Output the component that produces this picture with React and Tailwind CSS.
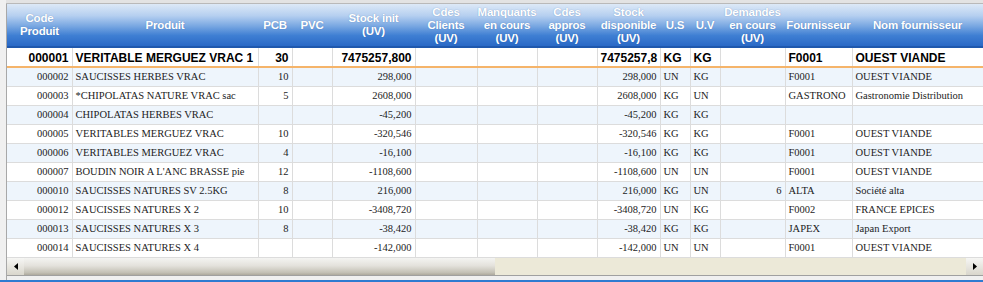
import React from "react";

const cols = [
    { key: "code", label: ["Code", "Produit"], w: 65, align: "right" },
    { key: "nom", label: ["Produit"], w: 186, align: "left" },
    { key: "pcb", label: ["PCB"], w: 34, align: "right" },
    { key: "pvc", label: ["PVC"], w: 40, align: "right" },
    { key: "init", label: ["Stock init", "(UV)"], w: 83, align: "right" },
    { key: "cli", label: ["Cdes", "Clients", "(UV)"], w: 62, align: "right" },
    { key: "manq", label: ["Manquants", "en cours", "(UV)"], w: 60, align: "right" },
    { key: "appro", label: ["Cdes", "appros", "(UV)"], w: 60, align: "right" },
    { key: "dispo", label: ["Stock", "disponible", "(UV)"], w: 63, align: "right" },
    { key: "us", label: ["U.S"], w: 30, align: "left" },
    { key: "uv", label: ["U.V"], w: 30, align: "left" },
    { key: "dem", label: ["Demandes", "en cours", "(UV)"], w: 65, align: "right" },
    { key: "four", label: ["Fournisseur"], w: 67, align: "left" },
    { key: "nomf", label: ["Nom fournisseur"], w: 131, align: "left" },
];

const r = (code, nom, pcb, stock, us, uv, four, nomf, dem = "") => ({
    code, nom, pcb, pvc: "", init: stock, cli: "", manq: "", appro: "",
    dispo: stock, us, uv, dem, four, nomf,
});

const first = {
    code: "000001", nom: "VERITABLE MERGUEZ VRAC 1", pcb: "30", pvc: "",
    init: "7475257,800", cli: "", manq: "", appro: "", dispo: "7475257,8",
    us: "KG", uv: "KG", dem: "", four: "F0001", nomf: "OUEST VIANDE",
};

const rows = [
    r("000002", "SAUCISSES HERBES VRAC", "10", "298,000", "UN", "KG", "F0001", "OUEST VIANDE"),
    r("000003", "*CHIPOLATAS NATURE VRAC sac", "5", "2608,000", "KG", "UN", "GASTRONO", "Gastronomie Distribution"),
    r("000004", "CHIPOLATAS HERBES VRAC", "", "-45,200", "KG", "KG", "", ""),
    r("000005", "VERITABLES MERGUEZ VRAC", "10", "-320,546", "KG", "KG", "F0001", "OUEST VIANDE"),
    r("000006", "VERITABLES MERGUEZ VRAC", "4", "-16,100", "KG", "KG", "F0001", "OUEST VIANDE"),
    r("000007", "BOUDIN NOIR A L'ANC BRASSE pie", "12", "-1108,600", "UN", "UN", "F0001", "OUEST VIANDE"),
    r("000010", "SAUCISSES NATURES SV 2.5KG", "8", "216,000", "KG", "UN", "ALTA", "Société alta", "6"),
    r("000012", "SAUCISSES NATURES X 2", "10", "-3408,720", "UN", "KG", "F0002", "FRANCE EPICES"),
    r("000013", "SAUCISSES NATURES X 3", "8", "-38,420", "KG", "KG", "JAPEX", "Japan Export"),
    r("000014", "SAUCISSES NATURES X 4", "", "-142,000", "UN", "UN", "F0001", "OUEST VIANDE"),
    r("", "", "", "", "", "", "", ""),
];

export default function App() {
    return (
        <div className="w-[983px] h-[282px] bg-[#f0f0f0] flex flex-col overflow-hidden font-['Liberation_Sans',Arial,sans-serif]">
            <div className="h-[4px] bg-[#e3e3e3] border-b border-[#b9b9b9] ml-[6px]" />
            <div className="flex-1 flex flex-col ml-[6px] border-l border-[#a8a8a8] bg-white overflow-hidden">
                <div className="h-[254px] overflow-hidden">
                    <table className="table-fixed border-collapse w-[976px]">
                        <colgroup>
                            {cols.map((c) => (
                                <col key={c.key} style={{ width: c.w }} />
                            ))}
                        </colgroup>
                        <thead>
                            <tr className="h-[43px]">
                                {cols.map((c) => (
                                    <th
                                        key={c.key}
                                        className="p-0 align-middle text-center text-white font-bold text-[11.5px] leading-[13px] tracking-[-0.2px] whitespace-nowrap overflow-hidden border-b-2 border-[#1f58ad] bg-[linear-gradient(to_bottom,#dde9f7_0%,#b5cff0_28%,#7aa8e2_52%,#3f7fd3_75%,#2a69c6_100%)] [text-shadow:0_0_1px_rgba(40,80,140,0.5)]"
                                    >
                                        {c.label.map((l, i) => (
                                            <div key={i}>{l}</div>
                                        ))}
                                    </th>
                                ))}
                            </tr>
                        </thead>
                        <tbody>
                            <tr className="h-[20px] bg-white">
                                {cols.map((c) => (
                                    <td
                                        key={c.key}
                                        className={`p-0 px-[3px] align-bottom leading-[15px] border-r border-[#dcdcdc] border-b-2 border-b-[#f5b46a] border-t border-t-[#e8a87a] text-[12px] font-bold text-black whitespace-nowrap overflow-hidden ${c.align === "right" ? "text-right" : "text-left"}`}
                                    >
                                        {first[c.key]}
                                    </td>
                                ))}
                            </tr>
                            {rows.map((row, i) => (
                                <tr
                                    key={i}
                                    className={`h-[19px] ${i % 2 === 0 ? "bg-[#eef5fc]" : "bg-white"}`}
                                >
                                    {cols.map((c) => (
                                        <td
                                            key={c.key}
                                            className={`p-0 px-[3px] border-r border-b border-[#dcdcdc] text-[10.5px] text-[#1c1c1c] font-['Liberation_Serif','Times_New_Roman',serif] whitespace-nowrap overflow-hidden ${c.align === "right" ? "text-right" : "text-left"}`}
                                        >
                                            {row[c.key]}
                                        </td>
                                    ))}
                                </tr>
                            ))}
                        </tbody>
                    </table>
                </div>
                <div className="h-[17px] flex bg-[#ece9d8]">
                    <div className="w-[17px] h-[17px] flex items-center justify-center bg-[linear-gradient(to_bottom,#f6f6f4,#d9d6cc)]">
                        <svg width="4" height="7" viewBox="0 0 4 7">
                            <polygon points="4,0 0,3.5 4,7" fill="#000" />
                        </svg>
                    </div>
                    <div className="w-[471px] h-[17px] bg-[linear-gradient(to_bottom,#f4f4f2_0%,#e4e2dc_45%,#c4c1b6_85%,#aeaa9e_100%)]" />
                    <div className="flex-1" />
                    <div className="w-[17px] h-[17px] flex items-center justify-center bg-[linear-gradient(to_bottom,#f6f6f4,#d9d6cc)]">
                        <svg width="4" height="7" viewBox="0 0 4 7">
                            <polygon points="0,0 4,3.5 0,7" fill="#000" />
                        </svg>
                    </div>
                </div>
                <div className="h-[5px] bg-[#f0f0f0] border-t border-[#a0a0a0]" />
            </div>
            <div className="h-[2px] bg-[#2f7bd1]" />
        </div>
    );
}
